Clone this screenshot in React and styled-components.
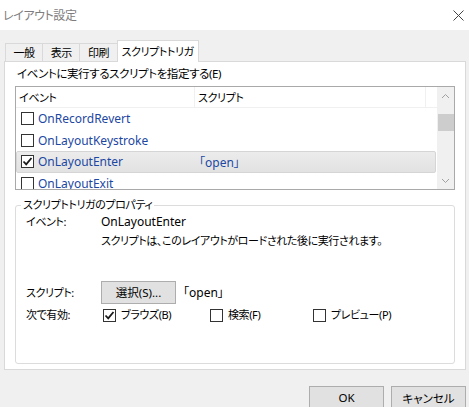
import React from 'react';
import styled, { createGlobalStyle } from 'styled-components';

const GlobalStyle = createGlobalStyle`
  html, body {
    margin: 0;
    padding: 0;
    background: #f0f0f0;
  }
  body {
    font-family: "Noto Sans", "Noto Sans CJK JP", sans-serif;
    font-size: 11px;
    letter-spacing: -0.4px;
    font-feature-settings: "palt";
    color: #000;
  }
`;

const Window = styled.div`
  width: 469px;
  height: 407px;
  overflow: hidden;
  display: flex;
  flex-direction: column;
  background: #f0f0f0;
`;

const TitleBar = styled.div`
  height: 30px;
  flex: none;
  background: #fff;
  display: flex;
  align-items: center;
  justify-content: space-between;
  padding: 0 5px 0 3px;
  color: #7d7d7d;
  font-size: 12px;
`;

const Body = styled.div`
  padding: 10px 3px 0 4px;
  display: flex;
  flex-direction: column;
`;

const TabRow = styled.div`
  display: flex;
  align-items: flex-end;
  padding-left: 1px;
  height: 22px;
`;

const Tab = styled.div`
  height: ${(p) => (p.active ? '22px' : '19px')};
  box-sizing: border-box;
  padding: 0 ${(p) => (p.active ? '4px' : '7.5px')};
  display: flex;
  align-items: center;
  border: 1px solid #d9d9d9;
  border-bottom: ${(p) => (p.active ? 'none' : '1px solid #d9d9d9')};
  margin-left: ${(p) => (p.first ? '0' : '-1px')};
  background: ${(p) => (p.active ? '#fff' : '#f0f0f0')};
  position: relative;
  z-index: ${(p) => (p.active ? 2 : 1)};
  font-size: 11px;
  line-height: 1;
`;

const Panel = styled.div`
  height: 309px;
  box-sizing: border-box;
  margin-top: -1px;
  border: 1px solid #d9d9d9;
  background: #fff;
  padding: 4px 10px 0 10px;
  display: flex;
  flex-direction: column;
`;

const Caption = styled.div`
  line-height: 16px;
  padding-left: 2px;
  font-size: 11.5px;
`;

const ListBox = styled.div`
  margin-top: 4px;
  width: 440px;
  height: 104px;
  box-sizing: border-box;
  border: 1px solid #a9a9a9;
  display: flex;
  overflow: hidden;
`;

const ListMain = styled.div`
  flex: 1;
  display: flex;
  flex-direction: column;
  overflow: hidden;
`;

const HeaderRow = styled.div`
  height: 21px;
  flex: none;
  display: grid;
  grid-template-columns: 179px 231px 1fr;
  border-bottom: 1px solid #f0f0f0;
  box-sizing: border-box;
`;

const HeaderCell = styled.div`
  display: flex;
  align-items: center;
  padding-left: 3px;
  border-right: 1px solid #f0f0f0;
`;

const Row = styled.div`
  height: 21.5px;
  flex: none;
  display: grid;
  grid-template-columns: 179px 1fr;
  align-items: center;
  box-sizing: border-box;
  margin-right: 1px;
  color: #1c47a3;
  font-size: 12px;
  letter-spacing: 0;
  background: ${(p) => (p.selected ? 'linear-gradient(#ececec, #e2e2e2)' : 'transparent')};
  border: 1px solid ${(p) => (p.selected ? '#d5d5d5' : 'transparent')};
  border-radius: 2px;
`;

const EventCell = styled.div`
  display: flex;
  align-items: center;
  gap: 4px;
  padding-left: 4px;
  white-space: nowrap;
`;

const ScriptCell = styled.div`
  padding-left: 3px;
  white-space: nowrap;
`;

const Scrollbar = styled.div`
  width: 17px;
  flex: none;
  background: #f0f0f0;
  display: flex;
  flex-direction: column;
  align-items: center;
`;

const ScrollArrow = styled.div`
  height: 17px;
  width: 17px;
  display: flex;
  align-items: center;
  justify-content: center;
`;

const ScrollThumb = styled.div`
  margin-top: 10px;
  width: 16px;
  height: 17px;
  background: #cdcdcd;
`;

const ScrollTrack = styled.div`
  flex: 1;
`;

const Box = styled.div`
  width: 13px;
  height: 13px;
  box-sizing: border-box;
  border: 1px solid #333;
  background: #fff;
  flex: none;
  display: flex;
  align-items: center;
  justify-content: center;
`;

const Group = styled.div`
  position: relative;
  margin-top: 15px;
  width: 440px;
  height: 159px;
  box-sizing: border-box;
  border: 1px solid #dcdcdc;
  border-radius: 3px;
  padding: 8px 0 0 10px;
`;

const Legend = styled.span`
  position: absolute;
  left: 5px;
  top: -9px;
  padding: 0 2px;
  background: #fff;
  line-height: 16px;
`;

const PropGrid = styled.div`
  display: grid;
  grid-template-columns: 75px 1fr;
  row-gap: 3px;
  align-items: center;
  line-height: 16px;
`;

const Spacer = styled.div`
  grid-column: 1 / -1;
  height: ${(p) => p.h}px;
`;

const Latin = styled.span`
  font-size: 12px;
  letter-spacing: 0;
`;

const Inline = styled.div`
  display: flex;
  align-items: center;
  gap: ${(p) => p.gap || 0}px;
  padding-left: ${(p) => p.pad || 0}px;
`;

const Button = styled.button`
  font: inherit;
  font-size: 11.5px;
  color: #000;
  width: ${(p) => p.w || 75}px;
  height: 23px;
  flex: none;
  background: #e1e1e1;
  border: 1px solid #adadad;
  padding: 0;
  display: flex;
  align-items: center;
  justify-content: center;
`;

const Option = styled.label`
  flex: none;
  display: flex;
  align-items: center;
  gap: 5px;
  width: ${(p) => p.w}px;
`;

const Footer = styled.div`
  display: flex;
  justify-content: flex-end;
  gap: 7px;
  padding: 16px 0 0 0;
`;

const Check = () => (
  <svg width="11" height="11" viewBox="0 0 11 11">
    <path d="M1.5 5.5 L4.2 8.3 L9.5 2" fill="none" stroke="#1a1a1a" strokeWidth="1.8" />
  </svg>
);

const CheckBox = ({ checked }) => <Box>{checked && <Check />}</Box>;

const rows = [
  { name: 'OnRecordRevert' },
  { name: 'OnLayoutKeystroke' },
  { name: 'OnLayoutEnter', checked: true, script: '「open」', selected: true },
  { name: 'OnLayoutExit' },
];

const App = () => (
  <Window>
    <GlobalStyle />
    <TitleBar>
      <span>レイアウト設定</span>
      <svg width="11" height="11" viewBox="0 0 11 11">
        <path d="M0.5 0.5 L10.5 10.5 M10.5 0.5 L0.5 10.5" stroke="#444" strokeWidth="1" />
      </svg>
    </TitleBar>
    <Body>
      <TabRow>
        <Tab first>一般</Tab>
        <Tab>表示</Tab>
        <Tab>印刷</Tab>
        <Tab active>スクリプトトリガ</Tab>
      </TabRow>
      <Panel>
        <Caption>イベントに実行するスクリプトを指定する(E)</Caption>
        <ListBox>
          <ListMain>
            <HeaderRow>
              <HeaderCell>イベント</HeaderCell>
              <HeaderCell>スクリプト</HeaderCell>
              <div />
            </HeaderRow>
            {rows.map((r) => (
              <Row key={r.name} selected={r.selected}>
                <EventCell>
                  <CheckBox checked={r.checked} />
                  {r.name}
                </EventCell>
                <ScriptCell>{r.script}</ScriptCell>
              </Row>
            ))}
          </ListMain>
          <Scrollbar>
            <ScrollArrow>
              <svg width="9" height="6" viewBox="0 0 9 6">
                <path d="M1 5 L4.5 1.5 L8 5" fill="none" stroke="#a0a0a0" strokeWidth="1" />
              </svg>
            </ScrollArrow>
            <ScrollThumb />
            <ScrollTrack />
            <ScrollArrow>
              <svg width="9" height="6" viewBox="0 0 9 6">
                <path d="M1 1 L4.5 4.5 L8 1" fill="none" stroke="#a0a0a0" strokeWidth="1" />
              </svg>
            </ScrollArrow>
          </Scrollbar>
        </ListBox>
        <Group>
          <Legend>スクリプトトリガのプロパティ</Legend>
          <PropGrid>
            <div>イベント:</div>
            <Latin>OnLayoutEnter</Latin>
            <div />
            <div>スクリプトは、このレイアウトがロードされた後に実行されます。</div>
            <Spacer h={26} />
            <div>スクリプト:</div>
            <Inline gap={7}>
              <Button>選択(S)...</Button>
              <Latin>「open」</Latin>
            </Inline>
            <div>次で有効:</div>
            <Inline pad={2}>
              <Option w={107}>
                <CheckBox checked />
                ブラウズ(B)
              </Option>
              <Option w={103}>
                <CheckBox />
                検索(F)
              </Option>
              <Option w={100}>
                <CheckBox />
                プレビュー(P)
              </Option>
            </Inline>
          </PropGrid>
        </Group>
      </Panel>
      <Footer>
        <Button w={75}>OK</Button>
        <Button w={75}>キャンセル</Button>
      </Footer>
    </Body>
  </Window>
);

export default App;
